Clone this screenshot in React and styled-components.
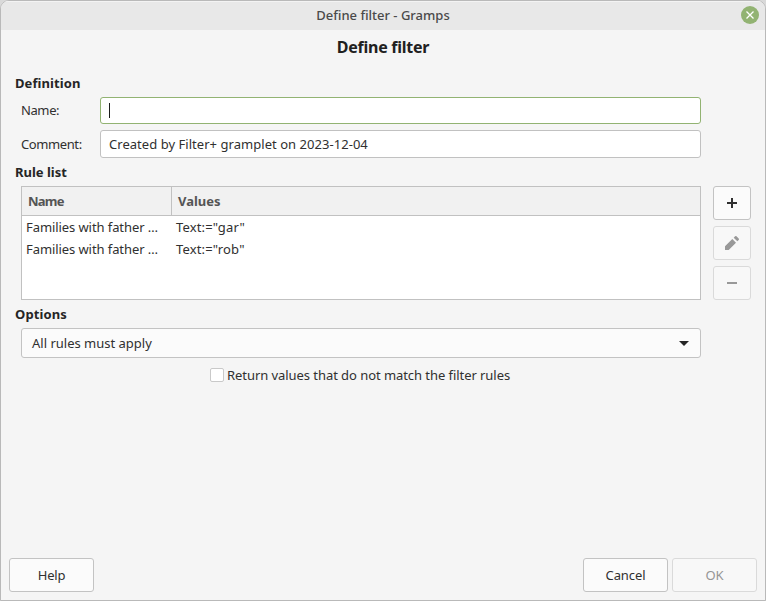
import React from "react";
import styled, { createGlobalStyle } from "styled-components";

const Global = createGlobalStyle`
  * { box-sizing: border-box; }
  html, body { margin: 0; padding: 0; background: #d9d9d9; overflow: hidden; }
  body {
    font-family: "Noto Sans", "Open Sans", sans-serif;
    font-size: 13px;
    color: #303030;
  }
`;

const Window = styled.div`
  width: 766px;
  height: 601px;
  display: flex;
  flex-direction: column;
  background: #f5f5f5;
  border: 1px solid #b9b9b9;
  border-radius: 9px 9px 0 0;
  overflow: hidden;
`;

const TitleBar = styled.header`
  height: 29px;
  flex: none;
  display: grid;
  grid-template-columns: 1fr auto 1fr;
  align-items: center;
  padding: 0 6px 1px;
  background: #e8e8e8;
  box-shadow: inset 0 1px 0 #f3f3f3;
  color: #4a4a4a;
`;

const WindowTitle = styled.div`
  grid-column: 2;
  font-weight: 500;
  line-height: 18px;
`;

const CloseButton = styled.button`
  justify-self: end;
  width: 18px;
  height: 18px;
  padding: 0;
  border: 0;
  border-radius: 50%;
  background: #92b372;
  display: flex;
`;

const Text = styled.span`
  letter-spacing: ${(p) => p.$track || 0}px;
  white-space: nowrap;
`;

const FieldLabel = styled(Text)`
  margin-bottom: ${(p) => (p.$raised ? 2 : 0)}px;
`;

const Heading = styled.h1`
  margin: 7px 0 17px;
  height: 20px;
  font-size: 16px;
  line-height: 20px;
  text-align: center;
  color: #202020;
`;

const Section = styled.h2`
  margin: 0;
  padding-left: 14px;
  height: 18px;
  font-size: 13px;
  line-height: 18px;
  color: #252525;
`;

const Form = styled.div`
  display: grid;
  grid-template-columns: 79px 601px;
  row-gap: 6px;
  margin: 5px 0 5px 20px;
  align-items: center;
`;

const Entry = styled.div`
  height: ${(p) => (p.$focused ? 27 : 28)}px;
  display: flex;
  align-items: center;
  padding-left: 8px;
  background: #fff;
  border: 1px solid ${(p) => (p.$focused ? "#92b372" : "#c1c1c1")};
  border-radius: 3px;
`;

const Caret = styled.i`
  width: 1px;
  height: 15px;
  background: #1c1c1c;
`;

const Rules = styled.div`
  display: flex;
  gap: 12px;
  margin: 5px 0 5px 20px;
`;

const Table = styled.div`
  width: 680px;
  height: 114px;
  background: #fff;
  border: 1px solid #c1c1c1;
`;

const HeaderRow = styled.div`
  display: grid;
  grid-template-columns: 150px 1fr;
  height: 29px;
  background: #f1f1f1;
  border-bottom: 1px solid #c1c1c1;
  color: #555;
  font-weight: 700;
`;

const HeaderCell = styled.div`
  padding-left: 6px;
  line-height: 28px;
  &:first-child { border-right: 1px solid #c1c1c1; }
`;

const Row = styled.div`
  display: grid;
  grid-template-columns: 150px 1fr;
  height: 22px;
  line-height: 22px;
  padding-left: 4px;
`;

const ToolColumn = styled.div`
  display: flex;
  flex-direction: column;
  gap: 6px;
`;

const Button = styled.button`
  width: ${(p) => (p.$icon ? 38 : 85)}px;
  height: 34px;
  padding: 0;
  display: flex;
  align-items: center;
  justify-content: center;
  font: inherit;
  background: ${(p) => (p.disabled ? "#f8f8f8" : "#fbfbfb")};
  border: 1px solid ${(p) => (p.disabled ? "#dadada" : "#c3c3c3")};
  border-radius: 3px;
  color: ${(p) => (p.disabled ? "#959595" : "#303030")};
`;

const Combo = styled.div`
  width: 680px;
  height: 30px;
  margin: 5px 0 0 20px;
  padding: 0 11px 0 10px;
  display: flex;
  align-items: center;
  justify-content: space-between;
  background: #fbfbfb;
  border: 1px solid #c3c3c3;
  border-radius: 3px;
`;

const CheckRow = styled.label`
  display: flex;
  align-items: center;
  gap: 3px;
  height: 20px;
  margin: 7px 0 0 209px;
`;

const CheckBox = styled.span`
  width: 14px;
  height: 14px;
  background: #fff;
  border: 1px solid #c9c9c9;
  border-radius: 2px;
`;

const Footer = styled.footer`
  margin-top: auto;
  padding: 0 8px 8px;
  display: flex;
  gap: 4px;
`;

const Spacer = styled.div`
  flex: 1;
`;

const rules = [
  ["Families with father …", 'Text:="gar"'],
  ["Families with father …", 'Text:="rob"'],
];

export default function App() {
  return (
    <>
      <Global />
      <Window>
        <TitleBar>
          <WindowTitle><Text>Define filter - Gramps</Text></WindowTitle>
          <CloseButton aria-label="Close">
            <svg width="18" height="18" viewBox="0 0 18 18">
              <path d="M5.500 5.500l7 7M12.500 5.500l-7 7" stroke="#fff" strokeWidth="1.300" fill="none" />
            </svg>
          </CloseButton>
        </TitleBar>
        <Heading><Text $track={-0.25}>Define filter</Text></Heading>
        <Section><Text $track={0.08}>Definition</Text></Section>
        <Form>
          <FieldLabel $raised $track={-0.4}>Name:</FieldLabel>
          <Entry $focused><Caret /></Entry>
          <FieldLabel $track={-0.4}>Comment:</FieldLabel>
          <Entry><Text $track={0.04}>Created by Filter+ gramplet on 2023-12-04</Text></Entry>
        </Form>
        <Section><Text>Rule list</Text></Section>
        <Rules>
          <Table>
            <HeaderRow>
              <HeaderCell><Text $track={-0.8}>Name</Text></HeaderCell>
              <HeaderCell><Text>Values</Text></HeaderCell>
            </HeaderRow>
            {rules.map(([name, value]) => (
              <Row key={value}>
                <Text $track={-0.08}>{name}</Text>
                <Text $track={0.15}>{value}</Text>
              </Row>
            ))}
          </Table>
          <ToolColumn>
            <Button $icon aria-label="Add">
              <svg width="16" height="16" viewBox="0 0 16 16">
                <path d="M3 7h4V3h2v4h4v2H9v4H7V9H3z" fill="#303030" />
              </svg>
            </Button>
            <Button $icon disabled aria-label="Edit">
              <svg width="16" height="16" viewBox="0 0 16 16">
                <path d="M1 11.300V15h3.700L12 7.700 8.300 4zM9.700 2.700l3.600 3.600 1.400-1.400a1 1 0 0 0 0-1.400l-2.200-2.200a1 1 0 0 0-1.400 0z" fill="#999" />
              </svg>
            </Button>
            <Button $icon disabled aria-label="Remove">
              <svg width="16" height="16" viewBox="0 0 16 16">
                <path d="M3 7h10v2H3z" fill="#999" />
              </svg>
            </Button>
          </ToolColumn>
        </Rules>
        <Section><Text $track={0.12}>Options</Text></Section>
        <Combo>
          <Text>All rules must apply</Text>
          <svg width="10" height="5" viewBox="0 0 10 5"><path d="M0 0h10L5 5z" fill="#252525" /></svg>
        </Combo>
        <CheckRow>
          <CheckBox />
          <Text $track={-0.06}>Return values that do not match the filter rules</Text>
        </CheckRow>
        <Footer>
          <Button><Text $track={-0.2}>Help</Text></Button>
          <Spacer />
          <Button><Text $track={-0.1}>Cancel</Text></Button>
          <Button disabled><Text>OK</Text></Button>
        </Footer>
      </Window>
    </>
  );
}
